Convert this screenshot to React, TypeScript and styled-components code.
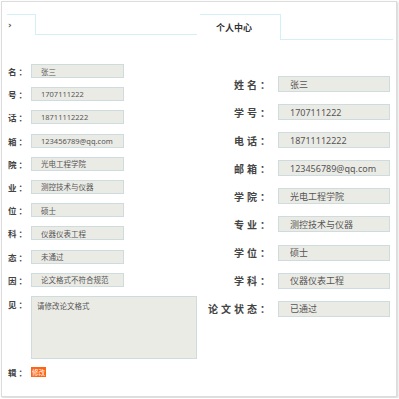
import React from "react";
import styled, { createGlobalStyle } from "styled-components";

const Global = createGlobalStyle`
  html, body { margin: 0; padding: 0; background: #fff; }
  body { font-family: "Noto Sans", "Noto Sans CJK SC", sans-serif; }
`;

const Frame = styled.div`
  box-sizing: border-box;
  margin: 1px;
  width: 396px;
  height: 396px;
  border: 1px solid #dcdcdc;
  box-shadow: 1px 1px 2px rgba(0, 0, 0, 0.18);
  display: flex;
  overflow: hidden;
`;

const Panel = styled.div<{ $w?: number }>`
  ${(p) => (p.$w ? `width: ${p.$w}px; flex: none;` : "flex: 1;")}
  display: flex;
  flex-direction: column;
  overflow: hidden;
`;

const TabBar = styled.div<{ $top: number; $h: number; $ml: number; $mr: number }>`
  display: flex;
  margin-top: ${(p) => p.$top}px;
  height: ${(p) => p.$h}px;
  margin-left: ${(p) => p.$ml}px;
  margin-right: ${(p) => p.$mr}px;
`;

const Tab = styled.div<{ $w: number; $pl: number; $size: number }>`
  box-sizing: border-box;
  width: ${(p) => p.$w}px;
  height: 100%;
  border-top: 1px solid #d2f0f5;
  border-right: 1px solid #d2f0f5;
  padding-left: ${(p) => p.$pl}px;
  display: flex;
  align-items: center;
  font-family: "Noto Sans CJK SC", sans-serif;
  font-weight: 700;
  font-size: ${(p) => p.$size}px;
  color: #333;
`;

const TabFill = styled.div`
  flex: 1;
  border-bottom: 1px solid #d2f0f5;
`;

const Form = styled.div<{ $top: number; $gap: number }>`
  display: flex;
  flex-direction: column;
  gap: ${(p) => p.$gap}px;
  margin-top: ${(p) => p.$top}px;
`;

const Row = styled.div<{ $gap: number; $align?: string }>`
  display: flex;
  align-items: ${(p) => p.$align || "center"};
  gap: ${(p) => p.$gap}px;
`;

const Label = styled.div<{ $w: number; $size: number; $ls: number; $pt?: number; $start?: boolean }>`
  box-sizing: border-box;
  flex: none;
  width: ${(p) => p.$w}px;
  display: flex;
  justify-content: ${(p) => (p.$start ? "flex-start" : "flex-end")};
  padding-left: ${(p) => (p.$start ? 6 : 0)}px;
  white-space: nowrap;
  font-family: "Noto Sans CJK SC", sans-serif;
  font-weight: 700;
  font-size: ${(p) => p.$size}px;
  color: #444;
  padding-top: ${(p) => p.$pt || 0}px;
  span { letter-spacing: ${(p) => p.$ls}px; }
`;

const Field = styled.div<{ $w: number; $h: number; $size: number; $pl: number }>`
  box-sizing: border-box;
  flex: none;
  width: ${(p) => p.$w}px;
  height: ${(p) => p.$h}px;
  background: #ebebe6;
  border: 1px solid #cfdcdf;
  padding-left: ${(p) => p.$pl}px;
  display: flex;
  align-items: center;
  font-family: "Noto Sans", "Noto Sans CJK SC", sans-serif;
  font-size: ${(p) => p.$size}px;
  color: #555;
  white-space: nowrap;
  overflow: hidden;
`;

const Area = styled.div`
  box-sizing: border-box;
  flex: none;
  width: 166px;
  height: 63px;
  background: #ebebe6;
  border: 1px solid #cfdcdf;
  padding: 3px 0 0 5px;
  font-family: "Noto Sans CJK SC", sans-serif;
  font-size: 7.5px;
  color: #555;
`;

const EditButton = styled.button`
  box-sizing: border-box;
  width: 15px;
  height: 10px;
  padding: 0;
  border: none;
  background: #ff6416;
  color: #fff;
  font-family: "Noto Sans CJK SC", sans-serif;
  font-size: 6.5px;
  line-height: 10px;
`;

const Chevron = styled.span`
  font-family: "DejaVu Sans", sans-serif;
  font-weight: 700;
  font-size: 9px;
  color: #555;
`;

const fields: [string, string][] = [
  ["姓名", "张三"],
  ["学号", "1707111222"],
  ["电话", "18711112222"],
  ["邮箱", "123456789@qq.com"],
  ["学院", "光电工程学院"],
  ["专业", "测控技术与仪器"],
  ["学位", "硕士"],
  ["学科", "仪器仪表工程"],
];

const leftFields: [string, string][] = [
  ["名", "张三"],
  ["号", "1707111222"],
  ["话", "18711112222"],
  ["箱", "123456789@qq.com"],
  ["院", "光电工程学院"],
  ["业", "测控技术与仪器"],
  ["位", "硕士"],
  ["科", "仪器仪表工程"],
  ["态", "未通过"],
  ["因", "论文格式不符合规范"],
];

const rightFields: [string, string][] = [...fields, ["论文状态", "已通过"]];

export default function App() {
  return (
    <>
      <Global />
      <Frame>
        <Panel $w={198}>
          <TabBar $top={12} $h={21} $ml={5} $mr={3}>
            <Tab $w={29} $pl={1} $size={9}>
              <Chevron>›</Chevron>
            </Tab>
            <TabFill />
          </TabBar>
          <Form $top={29} $gap={9.2}>
            {leftFields.map(([k, v]) => (
              <Row key={k} $gap={0}>
                <Label $w={29} $size={8.5} $ls={2} $start>
                  <span>{k}</span>：
                </Label>
                <Field $w={93} $h={14} $size={7.5} $pl={9}>
                  {v}
                </Field>
              </Row>
            ))}
            <Row $gap={0} $align="flex-start">
              <Label $w={29} $size={8.5} $ls={2} $pt={2} $start>
                <span>见</span>：
              </Label>
              <Area>请修改论文格式</Area>
            </Row>
          </Form>
          <Form $top={7} $gap={0}>
            <Row $gap={0}>
              <Label $w={29} $size={8.5} $ls={2} $start>
                <span>辑</span>：
              </Label>
              <EditButton>修改</EditButton>
            </Row>
          </Form>
        </Panel>
        <Panel>
          <TabBar $top={12} $h={26} $ml={0} $mr={3}>
            <Tab $w={81} $pl={16} $size={9}>
              个人中心
            </Tab>
            <TabFill />
          </TabBar>
          <Form $top={36} $gap={12.1}>
            {rightFields.map(([k, v]) => (
              <Row key={k} $gap={8}>
                <Label $w={70} $size={10} $ls={3}>
                  <span>{k}</span>：
                </Label>
                <Field $w={112} $h={16} $size={9} $pl={11}>
                  {v}
                </Field>
              </Row>
            ))}
          </Form>
        </Panel>
      </Frame>
    </>
  );
}
